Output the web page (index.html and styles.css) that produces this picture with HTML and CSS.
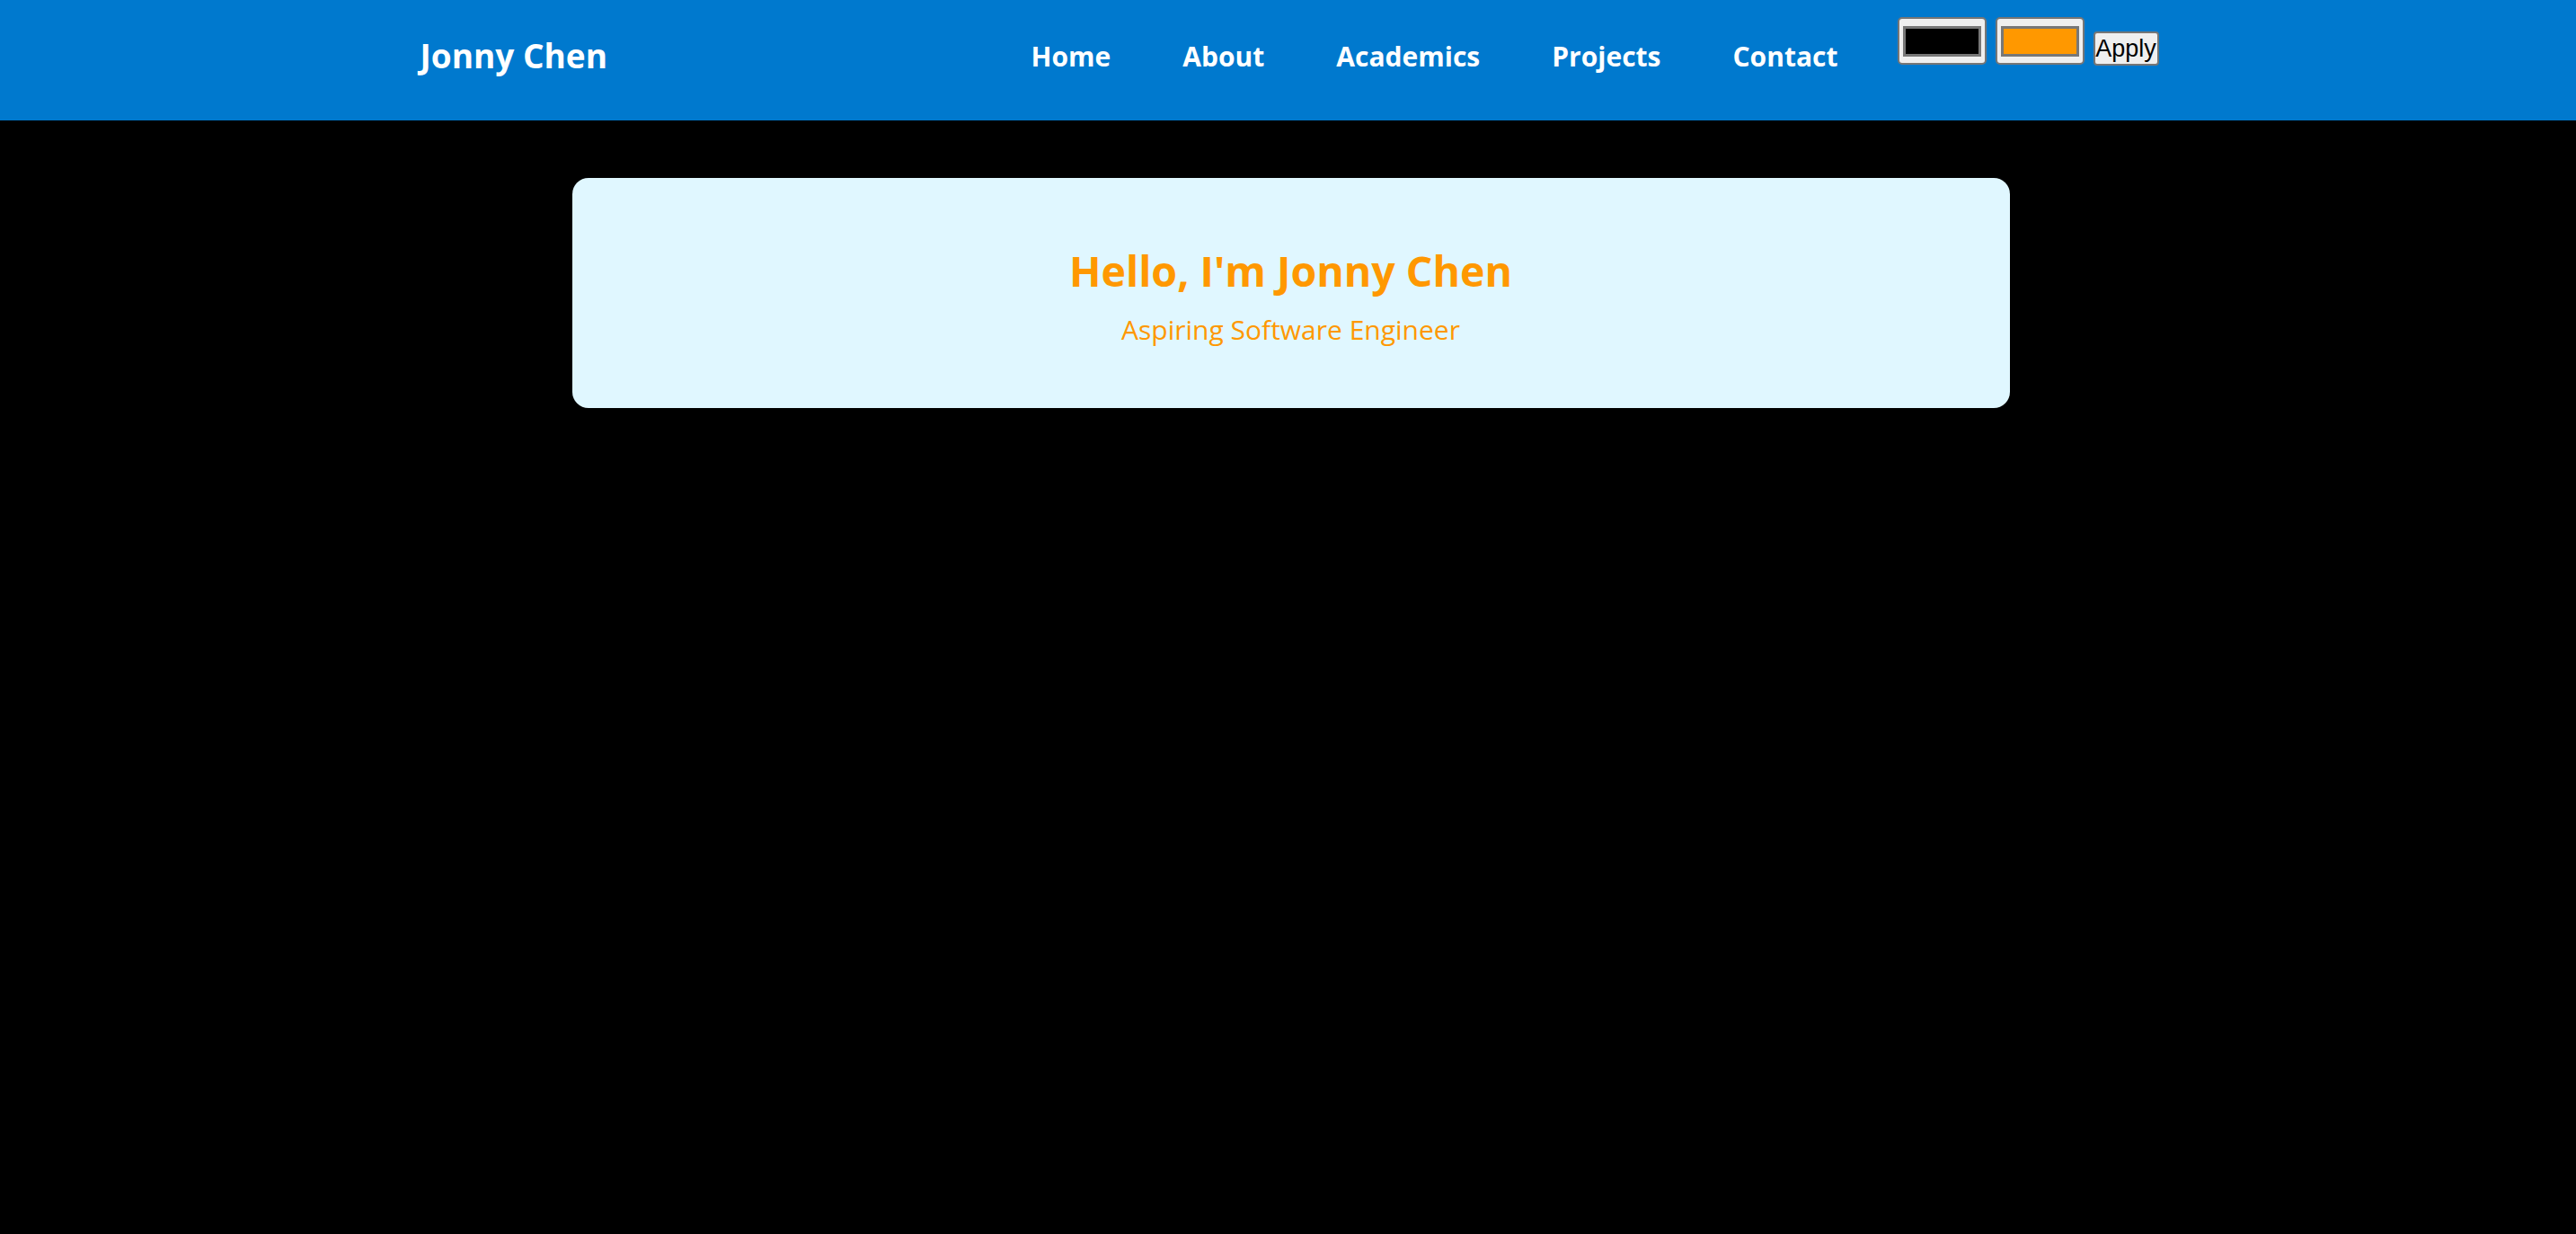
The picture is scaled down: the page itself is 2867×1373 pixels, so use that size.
FILE: index.html
```html
<!DOCTYPE html>
<html lang="en">
<head>
<meta charset="utf-8">
<title>Jonny Chen</title>
<link rel="stylesheet" href="styles.css">
</head>
<body>
<header class="site-header">
  <div class="header-inner">
    <div class="logo">Jonny Chen</div>
    <div class="header-right">
      <nav class="nav">
        <a href="#" class="nav-link">Home</a>
        <a href="#" class="nav-link">About</a>
        <a href="#" class="nav-link">Academics</a>
        <a href="#" class="nav-link">Projects</a>
        <a href="#" class="nav-link">Contact</a>
      </nav>
      <div class="theme-controls">
        <span class="color-box"><span class="swatch swatch-black"></span></span>
        <span class="color-box"><span class="swatch swatch-orange"></span></span>
        <button class="apply-btn" type="button">Apply</button>
      </div>
    </div>
  </div>
</header>
<main class="main">
  <section class="hero">
    <h1 class="hero-title">Hello, I'm Jonny Chen</h1>
    <p class="hero-sub">Aspiring Software Engineer</p>
  </section>
</main>
</body>
</html>
```

FILE: styles.css
```css
* { box-sizing: border-box; }
html, body { margin: 0; padding: 0; }
body {
  background: #000;
  font-family: "Open Sans", "Noto Sans", sans-serif;
  min-height: 1373px;
}
.site-header {
  background: #0079ce;
  height: 134px;
}
.header-inner {
  width: 1935px;
  margin: 0 0 0 calc(50% - 966px);
  height: 100%;
  display: flex;
  justify-content: space-between;
  align-items: center;
}
.logo {
  color: #fff;
  font-weight: 700;
  font-size: 37px;
  line-height: 1;
  margin-top: -12px;
}
.header-right {
  display: flex;
  align-items: center;
  height: 100%;
}
.nav {
  display: flex;
  gap: 80px;
  margin-top: -8px;
}
.nav-link {
  color: #fff;
  text-decoration: none;
  font-weight: 700;
  font-size: 30px;
  line-height: 1;
}
.theme-controls {
  display: flex;
  align-items: flex-end;
  align-self: flex-start;
  margin-top: 19px;
  margin-left: 66px;
  gap: 10px;
}
.color-box {
  display: flex;
  width: 99px;
  height: 53px;
  background: #efefef;
  border: 2px solid #767676;
  border-radius: 5px;
  padding: 8px 4px 7px 4px;
}
.swatch {
  flex: 1;
  border: 3px solid #777;
}
.swatch-black { background: #000; }
.swatch-orange { background: #ff9800; }
.apply-btn {
  font-family: "Liberation Sans", Arial, sans-serif;
  font-size: 27px;
  color: #000;
  background: #efefef;
  border: 2px solid #767676;
  border-radius: 4px;
  width: 73px;
  height: 38px;
  padding: 0;
  margin-bottom: -1px;
  line-height: 1;
}
.main {
  padding-top: 64px;
}
.hero {
  width: 1600px;
  height: 256px;
  margin: 0 0 0 calc(50% - 797px);
  background: #e0f7ff;
  border-radius: 18px;
  text-align: center;
  padding-top: 76px;
}
.hero-title {
  margin: 0;
  color: #ff9800;
  font-size: 46.5px;
  font-weight: 700;
  line-height: 1.2;
}
.hero-sub {
  margin: 19px 0 0;
  color: #ff9800;
  font-size: 30px;
  line-height: 1.2;
}
```
